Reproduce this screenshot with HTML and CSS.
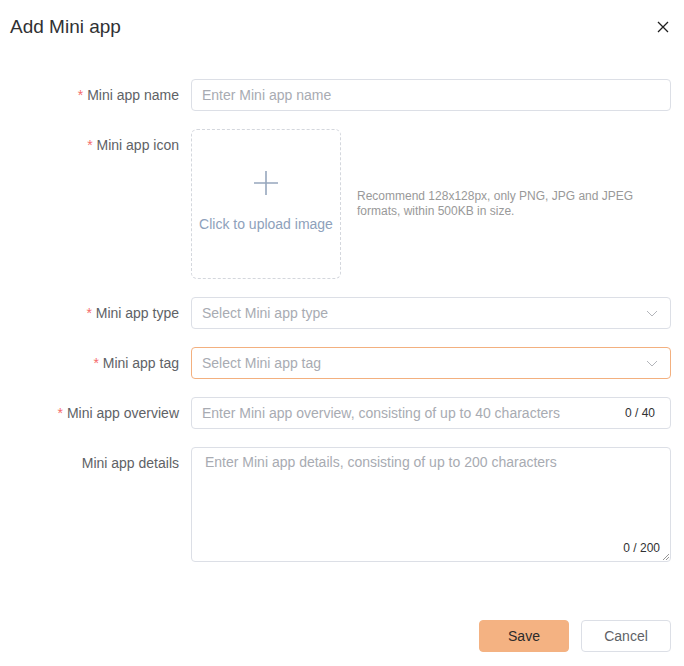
FILE: index.html
```html
<!DOCTYPE html>
<html lang="en">
<head>
<meta charset="utf-8">
<title>Add Mini app</title>
<link rel="stylesheet" href="styles.css">
</head>
<body>
<div class="dialog">
  <header class="dlg-header">
    <h1 class="dlg-title">Add Mini app</h1>
    <button class="dlg-close" aria-label="Close">
      <svg width="12" height="12" viewBox="0 0 12 12"><path d="M1 1L11 11M11 1L1 11" stroke="#1f1f1f" stroke-width="1.3" fill="none"/></svg>
    </button>
  </header>

  <form class="form">
    <div class="row">
      <label class="label"><span class="req">*</span> Mini app name</label>
      <div class="control">
        <div class="input"><span class="ph">Enter Mini app name</span></div>
      </div>
    </div>

    <div class="row">
      <label class="label"><span class="req">*</span> Mini app icon</label>
      <div class="control upload-wrap">
        <div class="upload">
          <svg class="plus" width="24" height="24" viewBox="0 0 24 24"><path d="M12 0V24M0 12H24" stroke="#97a7bd" stroke-width="1.6" fill="none"/></svg>
          <span class="upload-text">Click to upload image</span>
        </div>
        <p class="hint">Recommend 128x128px, only PNG, JPG and JPEG formats, within 500KB in size.</p>
      </div>
    </div>

    <div class="row">
      <label class="label"><span class="req">*</span> Mini app type</label>
      <div class="control">
        <div class="input select"><span class="ph">Select Mini app type</span>
          <svg class="chev" width="12" height="7" viewBox="0 0 12 7"><path d="M1 1L6 6L11 1" stroke="#b4b6bb" stroke-width="1" fill="none"/></svg>
        </div>
      </div>
    </div>

    <div class="row">
      <label class="label"><span class="req">*</span> Mini app tag</label>
      <div class="control">
        <div class="input select focus"><span class="ph">Select Mini app tag</span>
          <svg class="chev" width="12" height="7" viewBox="0 0 12 7"><path d="M1 1L6 6L11 1" stroke="#b4b6bb" stroke-width="1" fill="none"/></svg>
        </div>
      </div>
    </div>

    <div class="row">
      <label class="label"><span class="req">*</span> Mini app overview</label>
      <div class="control">
        <div class="input"><span class="ph">Enter Mini app overview, consisting of up to 40 characters</span><span class="count">0 / 40</span></div>
      </div>
    </div>

    <div class="row">
      <label class="label">Mini app details</label>
      <div class="control">
        <div class="textarea"><span class="ph">Enter Mini app details, consisting of up to 200 characters</span><span class="tcount">0 / 200</span>
          <svg class="grip" width="7" height="7" viewBox="0 0 7 7"><path d="M7 1L1 7M7 4L4 7" stroke="#8a8a8a" stroke-width="0.9" fill="none"/></svg>
        </div>
      </div>
    </div>
  </form>

  <footer class="dlg-footer">
    <button class="btn btn-primary">Save</button>
    <button class="btn">Cancel</button>
  </footer>
</div>
</body>
</html>
```

FILE: styles.css
```css
* { box-sizing: border-box; }
html, body { margin: 0; padding: 0; background: #fff; }
body {
  font-family: "Liberation Sans", Arial, sans-serif;
  color: #606266;
  width: 684px;
  height: 666px;
  overflow: hidden;
}
.dialog { display: flex; flex-direction: column; }
.dlg-header {
  height: 53px;
  display: flex;
  align-items: center;
  justify-content: space-between;
  padding: 0 15px 0 10px;
}
.dlg-title {
  margin: 0;
  font-size: 19px;
  font-weight: normal;
  color: #303133;
}
.dlg-close {
  border: 0;
  background: none;
  padding: 0;
  width: 12px;
  height: 12px;
  display: flex;
}
.form {
  padding: 26px 13px 0 0;
  display: flex;
  flex-direction: column;
  gap: 18px;
}
.row { display: flex; }
.label {
  width: 191px;
  flex: none;
  padding-right: 12px;
  text-align: right;
  font-size: 14px;
  line-height: 32px;
  color: #606266;
}
.req { color: #f56c6c; }
.control { flex: 1; min-width: 0; }
.input {
  height: 32px;
  border: 1px solid #dcdfe6;
  border-radius: 4px;
  display: flex;
  align-items: center;
  padding: 0 15px 0 10px;
  font-size: 14px;
}
.input.focus { border-color: #f3b07f; }
.ph { color: #a8abb2; white-space: nowrap; }
.select { justify-content: space-between; padding-right: 12px; }
.chev { flex: none; }
.count {
  margin-left: auto;
  font-size: 12px;
  color: #303133;
}
.upload-wrap { display: flex; align-items: center; gap: 16px; }
.upload {
  width: 150px;
  height: 150px;
  flex: none;
  border: 1px dashed #d4d7dd;
  border-radius: 6px;
  display: flex;
  flex-direction: column;
  align-items: center;
  padding-top: 41px;
}
.upload-text {
  margin-top: 21px;
  font-size: 14px;
  color: #8ea1bb;
}
.hint {
  margin: 0;
  font-size: 12px;
  line-height: 15px;
  color: #999;
  max-width: 300px;
}
.textarea {
  position: relative;
  height: 115px;
  border: 1px solid #dcdfe6;
  border-radius: 4px;
  padding: 6px 13px;
  font-size: 14px;
  line-height: 16px;
}
.tcount {
  position: absolute;
  right: 10px;
  bottom: 5px;
  font-size: 12px;
  color: #303133;
}
.grip { position: absolute; right: 1px; bottom: 1px; }
.dlg-footer {
  display: flex;
  justify-content: flex-end;
  gap: 12px;
  padding: 58px 13px 0 0;
}
.btn {
  width: 90px;
  height: 32px;
  border: 1px solid #dcdfe6;
  background: #fff;
  border-radius: 4px;
  font-family: inherit;
  font-size: 14px;
  color: #606266;
  padding: 0;
}
.btn-primary {
  background: #f4b282;
  border-color: #f4b282;
  color: #2b2b2b;
}
```
